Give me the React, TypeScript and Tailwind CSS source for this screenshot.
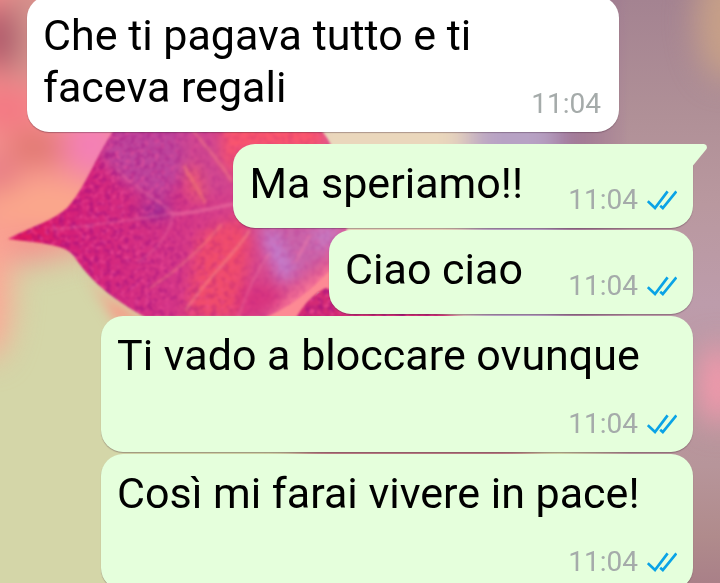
function Ticks() {
  return (
    <svg className="h-6 w-[30px]" viewBox="0 0 30 24" fill="none" stroke="#0aa3e6" strokeWidth="2.7" aria-label="Letto" role="img">
      <path d="M0.8 13.2 L8 20 L20.6 3.4" />
      <path d="M13.2 17.8 L15.8 20 L29.4 3.4" />
    </svg>
  );
}

function Wallpaper() {
  return (
    <svg className="absolute inset-0 h-full w-full" viewBox="0 0 720 583" preserveAspectRatio="xMidYMid slice" aria-hidden="true">
      <defs>
        <filter id="soft" x="-100%" y="-100%" width="300%" height="300%" colorInterpolationFilters="sRGB"><feGaussianBlur stdDeviation="15" /></filter>
        <filter id="mid" x="-50%" y="-50%" width="200%" height="200%" colorInterpolationFilters="sRGB"><feGaussianBlur stdDeviation="7" /></filter>
        <filter id="edge" colorInterpolationFilters="sRGB"><feGaussianBlur stdDeviation="0.9" /></filter>
        <filter id="dark" x="0" y="0" width="100%" height="100%" colorInterpolationFilters="sRGB">
          <feTurbulence type="fractalNoise" baseFrequency="0.17" numOctaves="3" seed="4" />
          <feColorMatrix values="0 0 0 0 0.62  0 0 0 0 0.06  0 0 0 0 0.5  4 0 0 0 -1.8" />
        </filter>
        <filter id="light" x="0" y="0" width="100%" height="100%" colorInterpolationFilters="sRGB">
          <feTurbulence type="fractalNoise" baseFrequency="0.2" numOctaves="2" seed="11" />
          <feColorMatrix values="0 0 0 0 0.95  0 0 0 0 0.32  0 0 0 0 0.6  0 4 0 0 -2" />
        </filter>
        <linearGradient id="right" x1="0" y1="0" x2="0" y2="1">
          <stop offset="0" stopColor="#a48391" />
          <stop offset="0.2" stopColor="#b09097" />
          <stop offset="0.35" stopColor="#b9989f" />
          <stop offset="0.52" stopColor="#bd9cab" />
          <stop offset="0.8" stopColor="#b7959a" />
          <stop offset="0.92" stopColor="#b08b8c" />
          <stop offset="1" stopColor="#a98088" />
        </linearGradient>
        <linearGradient id="rightFade" x1="560" y1="0" x2="630" y2="0" gradientUnits="userSpaceOnUse">
          <stop offset="0" stopColor="#fff" stopOpacity="0" />
          <stop offset="1" stopColor="#fff" />
        </linearGradient>
        <mask id="rightMask" maskUnits="userSpaceOnUse" x="560" y="0" width="160" height="583">
          <rect x="560" y="0" width="160" height="583" fill="url(#rightFade)" />
        </mask>
        <linearGradient id="grainFade" x1="120" y1="200" x2="225" y2="175" gradientUnits="userSpaceOnUse">
          <stop offset="0" stopColor="#fff" />
          <stop offset="1" stopColor="#fff" stopOpacity="0.3" />
        </linearGradient>
        <mask id="grainMask" maskUnits="userSpaceOnUse" x="0" y="120" width="370" height="200">
          <rect x="0" y="120" width="370" height="200" fill="url(#grainFade)" />
        </mask>
        <linearGradient id="leaf" x1="8" y1="240" x2="330" y2="230" gradientUnits="userSpaceOnUse">
          <stop offset="0" stopColor="#e21456" />
          <stop offset="0.2" stopColor="#d42078" />
          <stop offset="0.5" stopColor="#d43486" />
          <stop offset="1" stopColor="#dc5892" />
        </linearGradient>
        <clipPath id="leafShape">
          <path d="M8 239 C32 226 52 222 68 207 C88 184 98 150 118 125 L316 125 C340 145 360 215 338 262 C318 282 300 302 266 317 L145 317 C118 302 92 284 74 256 C65 244 40 243 8 239 Z" />
        </clipPath>
        <clipPath id="lowerLeaf">
          <path d="M296 318 C305 302 315 293 326 288 L350 300 L470 318 Z" />
        </clipPath>
      </defs>
      <rect width="720" height="583" fill="#d4d6a8" />
      <g filter="url(#soft)">
        <path d="M-60 -60 H300 V250 H75 L40 262 L-60 262 Z" fill="#f4918f" />
        <ellipse cx="45" cy="205" rx="65" ry="26" fill="#fba88c" />
        <ellipse cx="92" cy="145" rx="30" ry="32" fill="#f47fb8" />
        <rect x="14" y="-20" width="30" height="100" fill="#c9908a" />
        <ellipse cx="-3" cy="38" rx="16" ry="34" fill="#a44c62" />
        <ellipse cx="5" cy="108" rx="35" ry="20" fill="#f47682" />
        <ellipse cx="36" cy="148" rx="28" ry="12" fill="#d66c62" />
        <ellipse cx="0" cy="176" rx="14" ry="11" fill="#d55f7a" />
        <ellipse cx="-10" cy="290" rx="22" ry="70" fill="#fca795" />
        <rect x="300" y="90" width="170" height="250" fill="#ead7bc" />
        <rect x="470" y="90" width="100" height="260" fill="#b7a2c4" />
        <rect x="560" y="-40" width="100" height="400" fill="#9c6f92" />
        <rect x="300" y="440" width="230" height="24" fill="#a93a68" />
      </g>
      <rect x="560" y="0" width="160" height="583" fill="url(#right)" mask="url(#rightMask)" />
      <g filter="url(#soft)">
        <ellipse cx="726" cy="20" rx="30" ry="60" fill="#cda486" opacity="0.85" />
        <ellipse cx="718" cy="385" rx="18" ry="40" fill="#f898ac" />
      </g>
      <path d="M76 256 C94 290 118 308 148 322 L118 322 L90 280 Z" fill="#ff8c80" filter="url(#mid)" />
      <path d="M346 252 L350 296 L318 292 L296 322 L250 322 L300 290 Z" fill="#fd8a94" />
      <g filter="url(#edge)">
        <g clipPath="url(#leafShape)">
          <rect x="0" y="120" width="370" height="200" fill="url(#leaf)" />
          <g filter="url(#mid)">
            <path d="M115 120 L200 120 L195 160 L160 205 L120 180 L98 155 Z" fill="#be459c" />
            <path d="M180 130 L222 130 L235 190 L190 202 Z" fill="#cf4690" />
            <path d="M222 110 L320 110 L325 150 L238 150 L238 180 L222 160 Z" fill="#fb566c" />
            <path d="M198 235 L240 216 L250 240 L240 318 L185 318 Z" fill="#f04c6c" />
            <path d="M184 165 L198 168 L205 200 L192 200 Z" fill="#f0606e" />
            <path d="M138 206 L172 205 L166 219 L142 217 Z" fill="#8e2c9a" />
            <path d="M255 222 L345 222 L326 256 L300 278 L270 262 Z" fill="#c964aa" />
            <path d="M260 235 L275 230 L296 276 L280 283 Z" fill="#c280d0" />
            <path d="M315 225 L345 225 L335 245 L318 255 Z" fill="#c67cc4" />
            <path d="M240 285 L270 285 L285 300 L255 318 L235 318 Z" fill="#d8337e" />
            <path d="M345 256 L334 284 L304 307 L262 322 L290 296 Z" fill="#ff8098" />
          </g>
          <g mask="url(#grainMask)">
            <rect x="0" y="120" width="370" height="200" filter="url(#dark)" opacity="0.5" />
            <rect x="0" y="120" width="370" height="200" filter="url(#light)" opacity="0.5" />
          </g>
          <g fill="none" stroke="#f78aae" strokeWidth="1.5" opacity="0.45" filter="url(#edge)">
            <path d="M50 230 C90 226 130 220 170 214" />
            <path d="M170 214 C190 214 215 208 250 200" strokeWidth="3.5" />
            <path d="M172 212 C150 195 130 185 112 164" />
            <path d="M173 214 C170 232 160 248 138 262" />
            <path d="M150 288 C175 272 200 250 222 224" stroke="#ff9c86" strokeWidth="2" />
            <path d="M186 310 C205 280 232 258 250 230" stroke="#ffab90" strokeWidth="2.5" />
            <path d="M205 203 C200 190 188 178 184 165" stroke="#ff8e74" strokeWidth="3" />
            <path d="M232 182 C220 160 203 145 193 130" stroke="#ff8e84" strokeWidth="3" />
            <path d="M270 252 C254 275 244 300 238 318" />
            <path d="M310 235 C305 245 300 252 296 262" strokeWidth="3" />
          </g>
        </g>
        <path d="M296 318 C305 302 315 293 326 288 L350 300 L470 318 Z" fill="#d32a74" />
        <g clipPath="url(#lowerLeaf)">
          <rect x="290" y="284" width="180" height="34" filter="url(#dark)" opacity="0.65" />
          <rect x="290" y="284" width="180" height="34" filter="url(#light)" opacity="0.6" />
        </g>
      </g>
    </svg>
  );
}

type Message = { text: string; time: string; sent: boolean; tail?: boolean };

const messages: Message[] = [
  { text: "Che ti pagava tutto e ti faceva regali", time: "11:04", sent: false },
  { text: "Ma speriamo!!", time: "11:04", sent: true, tail: true },
  { text: "Ciao ciao", time: "11:04", sent: true },
  { text: "Ti vado a bloccare ovunque", time: "11:04", sent: true },
  { text: "Così mi farai vivere in pace!", time: "11:04", sent: true },
];

function Bubble({ text, time, sent, tail }: Message) {
  return (
    <li
      className={`relative max-w-[592px] rounded-[22px] px-4 pt-[13px] pb-[19px] shadow-[0_1px_1px_rgba(60,30,50,0.35)] ${
        sent ? "self-end bg-[#e5ffdc]" : "self-start bg-white"
      } ${tail ? "mt-2.5 rounded-tr-none" : ""}`}
    >
      {tail && (
        <svg className="absolute top-0 left-full h-[22px] w-[15px]" viewBox="0 0 15 22" aria-hidden="true">
          <path d="M-1 0 H11 Q15 1 13.5 5 L0 21.5 H-1 Z" fill="#e5ffdc" />
        </svg>
      )}
      <p className="text-[43px] leading-[52px] text-black">
        {text}
        <span className={`inline-block h-px ${sent ? "w-[154px]" : "w-24"}`} />
      </p>
      <div
        className={`absolute bottom-3 flex items-center gap-[9px] text-[28px] leading-8 text-[#a5abaa] ${
          sent ? "right-4" : "right-[18px]"
        }`}
      >
        <time>{time}</time>
        {sent && <Ticks />}
      </div>
    </li>
  );
}

export default function App() {
  return (
    <main className="relative h-screen overflow-hidden font-[Roboto,sans-serif]">
      <Wallpaper />
      <ul className="relative -mt-1 flex flex-col gap-0.5 px-[27px]">
        {messages.map((message) => (
          <Bubble key={message.text} {...message} />
        ))}
      </ul>
    </main>
  );
}
